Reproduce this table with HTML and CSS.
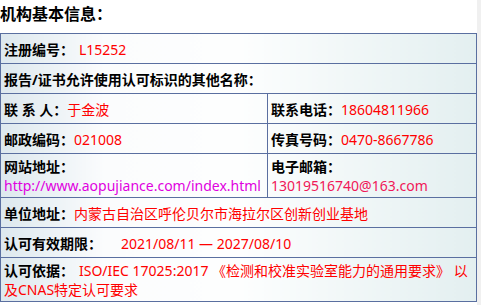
FILE: index.html
```html
<!DOCTYPE html>
<html lang="zh">
<head>
<meta charset="utf-8">
<link rel="stylesheet" href="styles.css">
</head>
<body>
<div class="page">
  <div class="title">机构基本信息：</div>
  <table class="info">
    <colgroup><col class="c1"><col class="c2"></colgroup>
    <tr class="r1">
      <td colspan="2"><span class="lbl">注册编号：</span><span class="val sp1">L15252</span></td>
    </tr>
    <tr class="r1">
      <td colspan="2"><span class="lbl">报告/证书允许使用认可标识的其他名称：</span></td>
    </tr>
    <tr class="r1">
      <td><span class="lbl">联 系 人：</span><span class="val">于金波</span></td>
      <td><span class="lbl">联系电话：</span><span class="val">18604811966</span></td>
    </tr>
    <tr class="r1">
      <td><span class="lbl">邮政编码：</span><span class="val">021008</span></td>
      <td><span class="lbl">传真号码：</span><span class="val">0470-8667786</span></td>
    </tr>
    <tr class="r2">
      <td><span class="lbl">网站地址：</span><br><span class="url">http://www.aopujiance.com/index.html</span></td>
      <td><span class="lbl">电子邮箱：</span><br><span class="mail">13019516740@163.com</span></td>
    </tr>
    <tr class="r1">
      <td colspan="2"><span class="lbl">单位地址：</span><span class="val">内蒙古自治区呼伦贝尔市海拉尔区创新创业基地</span></td>
    </tr>
    <tr class="r1">
      <td colspan="2"><span class="lbl">认可有效期限：</span><span class="val sp2">2021/08/11 — 2027/08/10</span></td>
    </tr>
    <tr class="r2">
      <td colspan="2"><span class="lbl">认可依据：</span><span class="val sp1">ISO/IEC 17025:2017 《检测和校准实验室能力的通用要求》 以及CNAS特定认可要求</span></td>
    </tr>
  </table>
</div>
</body>
</html>
```

FILE: styles.css
```css
html {
  background: #f0f0f0;
}
body {
  margin: 0;
  font-family: "Noto Sans", "Noto Sans CJK SC", sans-serif;
  color: #000;
}
.page {
  width: 477px;
  min-height: 305px;
  background: #fff;
}
.title {
  font-size: 16px;
  font-weight: bold;
  line-height: 24px;
  padding-top: 2px;
  height: 33px;
  box-sizing: border-box;
}
.info {
  width: 477px;
  border-collapse: collapse;
  table-layout: fixed;
  background: linear-gradient(to right, #dde8ee 0%, #fbfcfd 22%, #fdfefe 50%, #e3eff0 100%);
  font-size: 14px;
  line-height: 19px;
}
.c1 { width: 267px; }
.info td {
  border: 1px solid #5a6fa0;
  padding: 3px 3px 2px 3px;
  vertical-align: middle;
  text-align: left;
}
.r1 td { height: 24px; }
.lbl { font-weight: bold; }
.val { color: #ff0000; }
.sp1 { margin-left: 5px; }
.sp2 { margin-left: 19px; }
.url { color: #e000e0; white-space: nowrap; }
.mail { color: #f01858; }
```
